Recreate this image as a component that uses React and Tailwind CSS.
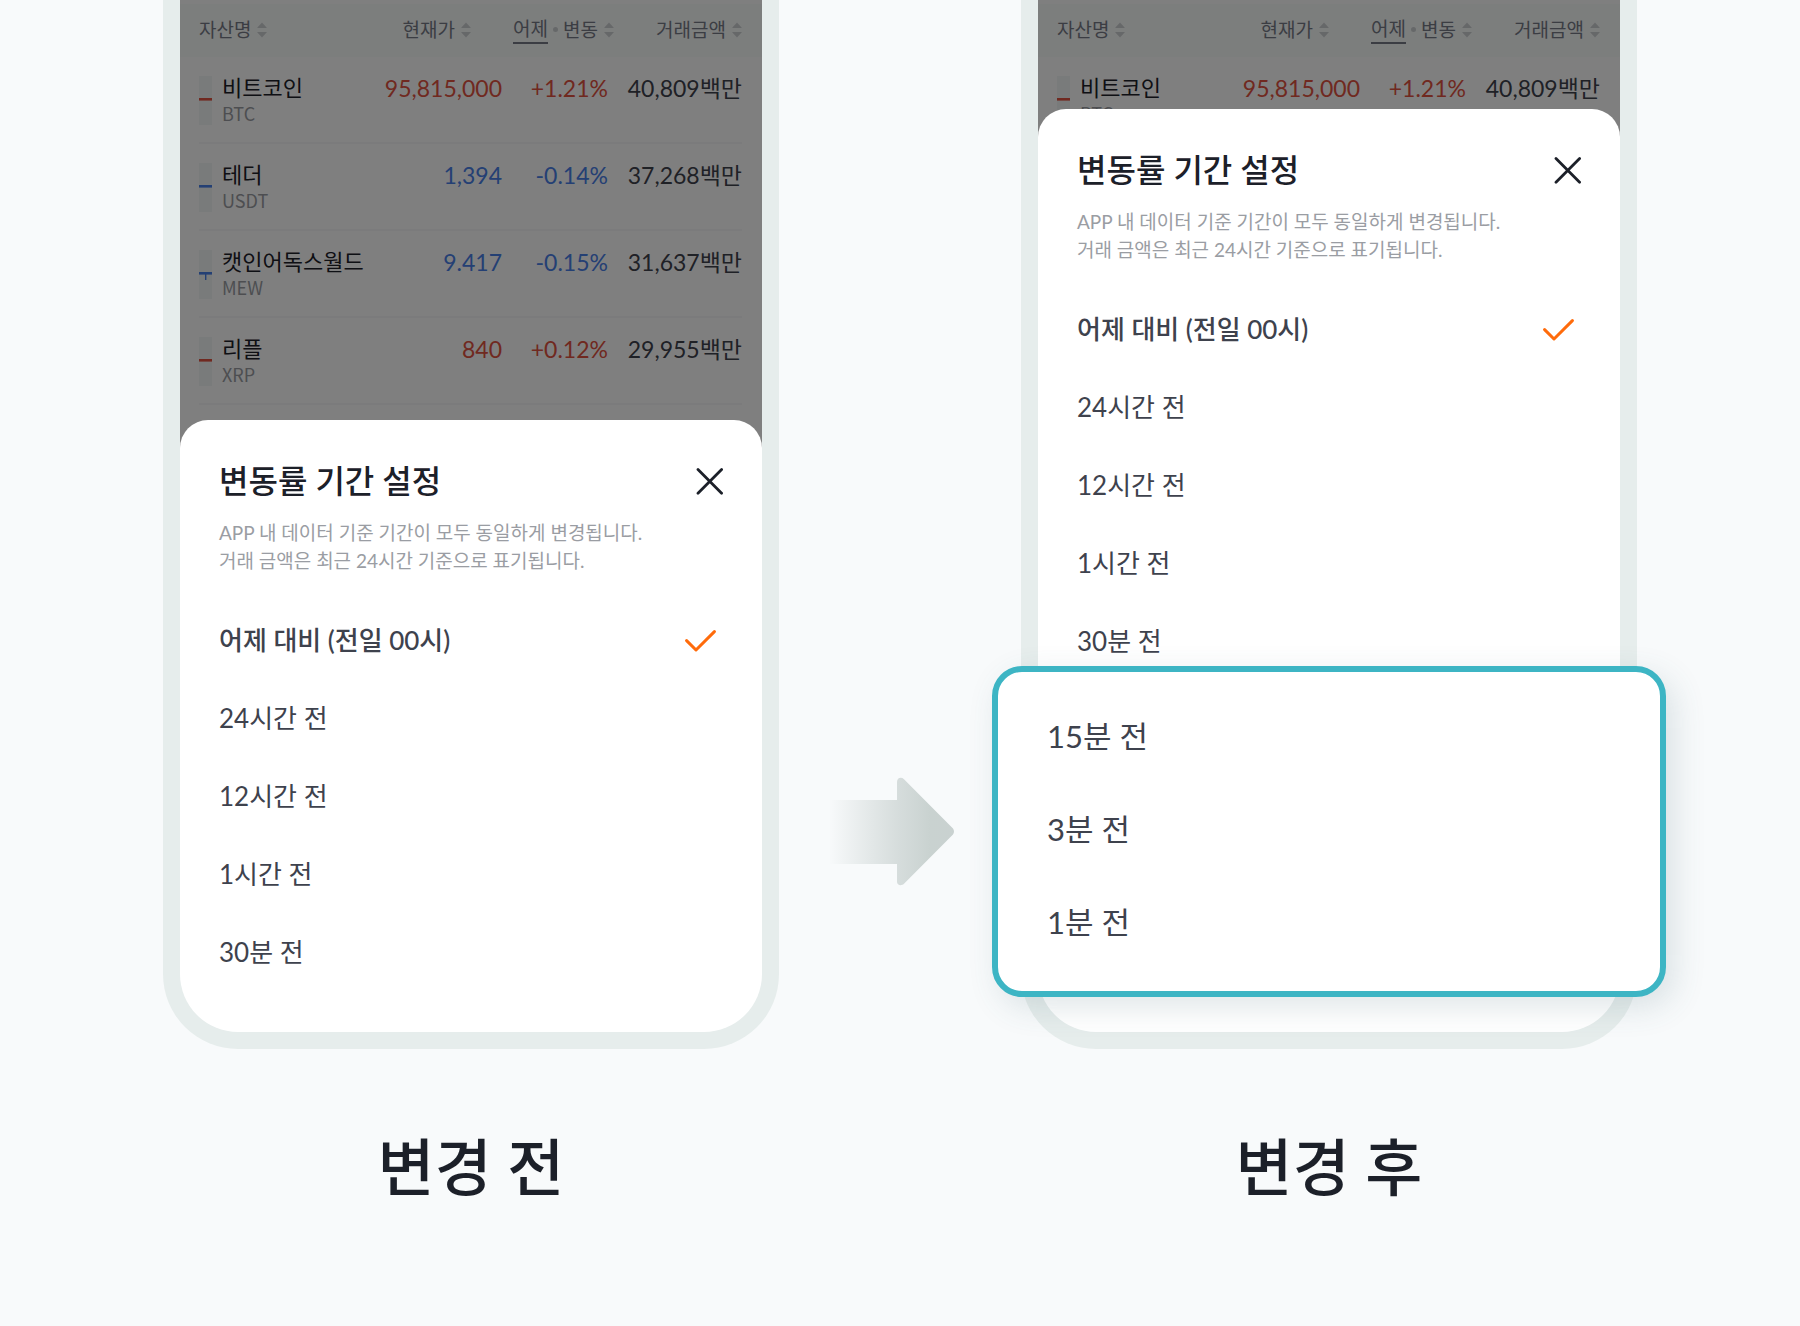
import React, { useState } from 'react';

const assets = [
  { name: '비트코인', symbol: 'BTC', price: '95,815,000', change: '+1.21%', volume: '40,809백만', up: true },
  { name: '테더', symbol: 'USDT', price: '1,394', change: '-0.14%', volume: '37,268백만', up: false },
  { name: '캣인어독스월드', symbol: 'MEW', price: '9.417', change: '-0.15%', volume: '31,637백만', up: false, wick: true },
  { name: '리플', symbol: 'XRP', price: '840', change: '+0.12%', volume: '29,955백만', up: true },
];

const periods = ['어제 대비 (전일 00시)', '24시간 전', '12시간 전', '1시간 전', '30분 전'];
const newPeriods = ['15분 전', '3분 전', '1분 전'];

const SortIcon = () => (
  <svg viewBox="0 0 10 16" className="w-[10px] h-4 shrink-0" fill="#cdd1d3" aria-hidden="true">
    <path d="M5 0.6 L9.6 5.4 Q9.8 6 9.2 6 H0.8 Q0.2 6 0.4 5.4 Z" />
    <path d="M5 15.4 L9.6 10.6 Q9.8 10 9.2 10 H0.8 Q0.2 10 0.4 10.6 Z" />
  </svg>
);

const Candle = ({ up, wick }) => (
  <svg viewBox="0 0 13 49" className="w-[13px] h-[49px] mt-[2px] shrink-0" aria-hidden="true">
    <rect width="13" height="49" fill="#f3f7f6" />
    <rect y="22" width="13" height="2.6" fill={up ? '#e15241' : '#4980e8'} />
    {wick && <rect x="6" y="24" width="1.4" height="6" fill="#4980e8" />}
  </svg>
);

const SortButton = ({ children }) => (
  <button type="button" className="inline-flex items-center gap-[6px] whitespace-nowrap">
    <span className="flex items-center">{children}</span>
    <SortIcon />
  </button>
);

const AssetTable = ({ rows }) => (
  <table className="w-full table-fixed border-collapse">
    <colgroup>
      <col />
      <col className="w-[142px]" />
      <col className="w-[106px]" />
      <col className="w-[154px]" />
    </colgroup>
    <thead>
      <tr className="h-[53px] bg-[#f9fcfb] text-[19px] leading-[28px] text-[#767b87]">
        <th className="p-0 pl-[19px] pb-[2px] text-left font-normal">
          <SortButton>자산명</SortButton>
        </th>
        <th className="p-0 pr-[31px] pb-[2px] text-right font-normal">
          <SortButton>현재가</SortButton>
        </th>
        <th className="p-0 pb-[2px] text-right font-normal">
          <div className="-mr-[6px] flex justify-end">
            <SortButton>
              <span className="border-b-2 border-[#767b87] leading-[26px]">어제</span>
              <span className="mx-[5px] h-[5px] w-[5px] rounded-full bg-[#cdd1d3]"></span>
              변동
            </SortButton>
          </div>
        </th>
        <th className="p-0 pr-5 pb-[2px] text-right font-normal">
          <SortButton>거래금액</SortButton>
        </th>
      </tr>
    </thead>
    <tbody className="text-[23px] leading-[28px] text-right">
      {rows.map((asset) => (
        <tr key={asset.symbol} className={asset.up ? 'text-[#e15241]' : 'text-[#4980e8]'}>
          <td className="p-0 pl-[19px] text-left">
            <div className="h-[87px] border-b-2 border-[#f6f7f8] pt-[17px] flex gap-[10px]">
              <Candle up={asset.up} wick={asset.wick} />
              <div className="whitespace-nowrap">
                <p className="text-[22px] leading-[28px] text-[#1c2029]">{asset.name}</p>
                <p className="text-[18px] leading-[22px] text-[#9a9da3] font-['Noto_Sans_CJK_KR',sans-serif]">{asset.symbol}</p>
              </div>
            </div>
          </td>
          <td className="p-0">
            <div className="h-[87px] border-b-2 border-[#f6f7f8] pt-[17px]">{asset.price}</div>
          </td>
          <td className="p-0">
            <div className="h-[87px] border-b-2 border-[#f6f7f8] pt-[17px]">{asset.change}</div>
          </td>
          <td className="p-0 pr-5 text-[#3e424d]">
            <div className="h-[87px] border-b-2 border-[#f6f7f8] pt-[17px]">{asset.volume}</div>
          </td>
        </tr>
      ))}
    </tbody>
  </table>
);

const PeriodOption = ({ group, label, selected, onSelect, large }) => (
  <label
    className={`flex items-center justify-between cursor-pointer ${large ? 'h-[93px] text-[31px]' : 'h-[78px] text-[26px]'} ${selected ? 'font-medium' : 'font-normal'}`}
  >
    <input
      type="radio"
      name={group}
      value={label}
      checked={selected}
      onChange={() => onSelect(label)}
      className="sr-only"
    />
    {label}
    {selected && (
      <svg viewBox="0 0 32 24" className="w-8 h-6 mr-[7px]" fill="none" stroke="#ff6b0b" strokeWidth="3" strokeLinecap="round" strokeLinejoin="round" aria-hidden="true">
        <path d="M2.6 12.6 L12 22 L30.4 3.6" />
      </svg>
    )}
  </label>
);

const Phone = ({ group, rows, listHeight, extended }) => {
  const [selected, setSelected] = useState(periods[0]);

  return (
    <div className="bg-[#e6edec] px-[17px] pb-[17px] rounded-b-[75px]">
      {/* Asset list behind the sheet */}
      <div className={`relative overflow-hidden bg-white pt-1 ${listHeight}`}>
        <AssetTable rows={rows} />
        <div className="absolute inset-0 bg-black/50"></div>
      </div>

      {/* Bottom sheet */}
      <div className={`relative -mt-[28px] bg-white rounded-t-[28px] rounded-b-[58px] px-[39px] pt-10 text-[#3e424d] ${extended ? 'pb-[35px]' : 'pb-[41px]'}`}>
        <div className="flex items-center justify-between">
          <h2 className="text-[32px] leading-[42px] font-medium text-[#1c2029]">변동률 기간 설정</h2>
          <button type="button" aria-label="닫기">
            <svg viewBox="0 0 28 28" className="w-7 h-7" stroke="#1c2029" strokeWidth="2.8" strokeLinecap="round" aria-hidden="true">
              <path d="M3 2.6 L26.6 26.2 M26.6 2.6 L3 26.2" />
            </svg>
          </button>
        </div>
        <p className="mt-[17px] text-[19px] leading-[28px] text-[#9a9da3]">
          APP 내 데이터 기준 기간이 모두 동일하게 변경됩니다.
          <br />
          거래 금액은 최근 24시간 기준으로 표기됩니다.
        </p>

        <div className="mt-[26px]">
          {periods.map((label) => (
            <PeriodOption key={label} group={group} label={label} selected={selected === label} onSelect={setSelected} />
          ))}
        </div>

        {extended && (
          <div className="relative -mx-[85px] -mt-[14px] bg-white border-6 border-[#3db5c4] rounded-[30px] px-[49px] pt-[18px] pb-[22px] shadow-[8px_10px_32px_rgba(60,100,110,0.16)]">
            {newPeriods.map((label) => (
              <PeriodOption key={label} group={group} label={label} selected={selected === label} onSelect={setSelected} large />
            ))}
          </div>
        )}
      </div>
    </div>
  );
};

const Arrow = () => (
  <svg viewBox="0 0 128 110" className="w-32 h-[110px]" aria-hidden="true">
    <defs>
      <linearGradient id="arrowFade" gradientUnits="userSpaceOnUse" x1="2" y1="0" x2="128" y2="0">
        <stop offset="0" stopColor="#cbd3d2" stopOpacity="0" />
        <stop offset="0.55" stopColor="#cdd5d4" stopOpacity="0.8" />
        <stop offset="0.8" stopColor="#c9d2d0" />
        <stop offset="1" stopColor="#c9d1d0" />
      </linearGradient>
    </defs>
    <path
      fill="url(#arrowFade)"
      d="M2 23 H70 V5 C70 1 74 -0.5 77 2.2 L126 51.5 Q128 54.5 126 57.5 L77 106.8 C74 109.5 70 108 70 105 V87 H2 Z"
    />
  </svg>
);

const Caption = ({ children }) => (
  <figcaption className="mt-[78px] text-center text-[62px] leading-[80px] font-medium text-[#1c2029]">{children}</figcaption>
);

const App = () => {
  return (
    <main className="min-h-screen bg-[#f8fafb] px-[163px] flex items-start font-[Lato,'Noto_Sans_CJK_KR',sans-serif]">
      <figure className="flex-1 min-w-0">
        <Phone group="period-before" rows={assets} listHeight="h-[448px]" />
        <Caption>변경 전</Caption>
      </figure>

      <div className="w-[242px] shrink-0 pl-[48px] pt-[777px]">
        <Arrow />
      </div>

      <figure className="flex-1 min-w-0">
        <Phone group="period-after" rows={assets.slice(0, 1)} listHeight="h-[137px]" extended />
        <Caption>변경 후</Caption>
      </figure>
    </main>
  );
};

export default App;
